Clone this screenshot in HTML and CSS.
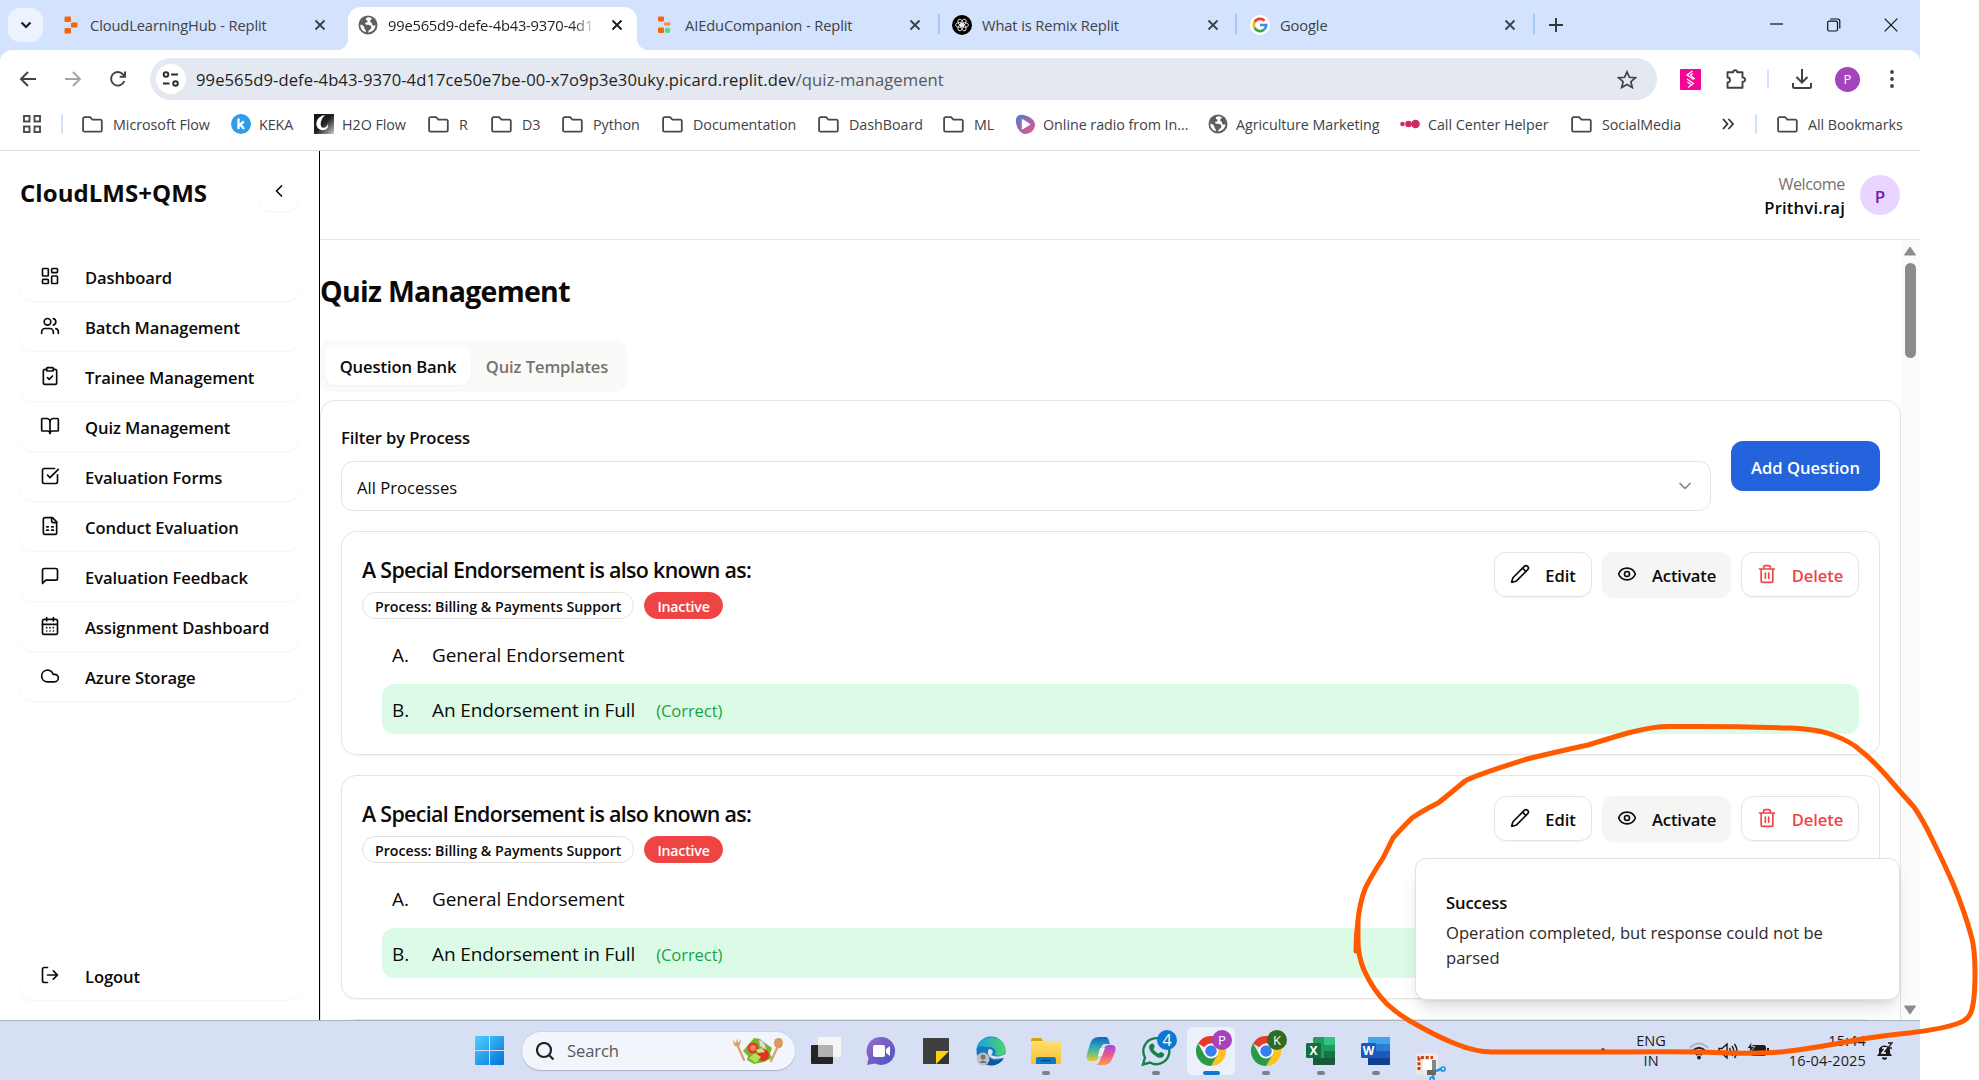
FILE: index.html
```html
<!DOCTYPE html>
<html lang="en">
<head>
<meta charset="utf-8">
<title>Quiz Management</title>
<link rel="stylesheet" href="styles.css">
</head>
<body>
<svg class="defs" width="0" height="0">
  <defs>
    <linearGradient id="g-win" x1="0" y1="0" x2="1" y2="1"><stop offset="0" stop-color="#4fd0ff"/><stop offset="1" stop-color="#0072d6"/></linearGradient>
    <linearGradient id="g-radio" x1="0" y1="0" x2="1" y2="1"><stop offset="0" stop-color="#4d7fd6"/><stop offset="1" stop-color="#f0507c"/></linearGradient>
    <linearGradient id="g-h2o" x1="0" y1="0" x2="1" y2="1"><stop offset="0" stop-color="#111"/><stop offset=".5" stop-color="#222"/><stop offset="1" stop-color="#ccc"/></linearGradient>
    <linearGradient id="g-chat" x1="0" y1="0" x2="1" y2="1"><stop offset="0" stop-color="#9a6bc9"/><stop offset="1" stop-color="#4a52c0"/></linearGradient>
    <linearGradient id="g-edge" x1="0" y1="0" x2="1" y2="0"><stop offset="0" stop-color="#1a9be6"/><stop offset="1" stop-color="#4fd66a"/></linearGradient>
    <linearGradient id="g-folder" x1="0" y1="0" x2="0" y2="1"><stop offset="0" stop-color="#ffdf6e"/><stop offset="1" stop-color="#f7c233"/></linearGradient>
    <linearGradient id="g-cop1" x1="0" y1="0" x2="0" y2="1"><stop offset="0" stop-color="#1464c8"/><stop offset=".5" stop-color="#35b6b0"/><stop offset="1" stop-color="#e8c820"/></linearGradient>
    <linearGradient id="g-cop2" x1="0" y1="0" x2="0" y2="1"><stop offset="0" stop-color="#9a4de0"/><stop offset=".5" stop-color="#ec5a8e"/><stop offset="1" stop-color="#f89a50"/></linearGradient>
  </defs>
  <symbol id="folder" viewBox="0 0 21 17"><path d="M2.5 1.2h5.6l2.3 2.5h8a1.4 1.4 0 0 1 1.4 1.4v9.2a1.4 1.4 0 0 1-1.4 1.4H2.5a1.4 1.4 0 0 1-1.4-1.4V2.6a1.4 1.4 0 0 1 1.4-1.4z" fill="none" stroke="#47494d" stroke-width="1.8"/></symbol>
  <symbol id="x" viewBox="0 0 12 12"><path d="M1.5 1.5l9 9M10.500 1.500l-9 9" fill="none" stroke="currentColor" stroke-width="1.9"/></symbol>
  <symbol id="globe" viewBox="0 0 20 20"><circle cx="10" cy="10" r="9.500" fill="#5c6065"/><path d="M10.500 2.300c-3 .2-3.200 2.200-1.600 3.200 1.500.9.400 2.200-1.100 2.300-1.500.1-.4 2.100 1.400 2 2.400-.2 4.500.8 4.200 2.800-.3 2-2.600 2-3.200 4.800 4-.1 7-3.300 7.200-7.100-1.500 1-3.400.4-3.300-1.200.1-1.600-2.100-1.300-2-3 .1-1.300 1.500-1.300 1.800-2.600-1-.7-2.200-1.200-3.400-1.200z" fill="#fff"/><path d="M2.400 9.500c2 .2 4 1.700 4 3.500 0 1.500 1.500 1.300 1.600 4.200C4.500 16.600 2 13.300 2.400 9.500z" fill="#fff"/></symbol>
  <symbol id="pencil" viewBox="0 0 24 24"><path d="M21.174 6.812a1 1 0 0 0-3.986-3.987L3.842 16.174a2 2 0 0 0-.5.830l-1.321 4.352a.5.500 0 0 0 .623.622l4.353-1.320a2 2 0 0 0 .830-.497z"/><path d="m15 5 4 4"/></symbol>
  <symbol id="eye" viewBox="0 0 24 24"><path d="M2.062 12.348a1 1 0 0 1 0-.696 10.750 10.750 0 0 1 19.876 0 1 1 0 0 1 0 .696 10.750 10.750 0 0 1-19.876 0"/><circle cx="12" cy="12" r="3"/></symbol>
  <symbol id="trash" viewBox="0 0 24 24"><path d="M3 6h18M19 6v14c0 1-1 2-2 2H7c-1 0-2-1-2-2V6M8 6V4c0-1 1-2 2-2h4c1 0 2 1 2 2v2M10 11v6M14 11v6"/></symbol>
  <symbol id="chrome" viewBox="0 0 30 30"><path d="M15 15L2 7.500A15 15 0 0 1 28 7.500H15z" fill="#e33b2e"/><path d="M28 7.500A15 15 0 0 1 15 30l6.500-11.200L15 7.500z" fill="#fcc31e"/><path d="M2 7.500A15 15 0 0 0 15 30l6.500-11.200L8.500 18.800z" fill="#2a9a48"/><circle cx="15" cy="15" r="7.500" fill="#fff"/><circle cx="15" cy="15" r="5.800" fill="#3a7df0"/></symbol>
</svg>

<div class="window">
  <header class="tabstrip">
    <button class="tab-search"><svg width="12" height="8" viewBox="0 0 12 8"><path d="M1.500 1.500L6 6l4.500-4.500" fill="none" stroke="#1f1f1f" stroke-width="2.200"/></svg></button>
    <div class="tab tab-1">
      <svg class="fav" viewBox="0 0 20 20"><g fill="#f5650f"><rect x="4.500" y="1.500" width="6.500" height="5.500" rx="1"/><rect x="11" y="7.500" width="6.500" height="5" rx="1"/><rect x="4.500" y="13" width="6.500" height="5.500" rx="1"/></g></svg>
      <span class="tab-title">CloudLearningHub - Replit</span><svg class="close"><use href="#x"/></svg>
    </div>
    <div class="tab tab-2 active">
      <svg class="fav"><use href="#globe"/></svg>
      <span class="tab-title">99e565d9-defe-4b43-9370-4d1</span><svg class="close"><use href="#x"/></svg>
    </div>
    <div class="tab tab-3">
      <svg class="fav" viewBox="0 0 20 20"><rect x="3" y="1.500" width="6" height="5" rx="1" fill="#f5650f"/><rect x="9" y="7.500" width="6.500" height="3" rx="1" fill="#f58a50"/><rect x="3" y="12.500" width="6" height="5.500" rx="1" fill="#f5650f"/><circle cx="12.500" cy="15.300" r="2.800" fill="#5fd97e"/></svg>
      <span class="tab-title">AIEduCompanion - Replit</span><svg class="close"><use href="#x"/></svg>
    </div>
    <div class="tab tab-4">
      <svg class="fav" viewBox="0 0 20 20"><circle cx="10" cy="10" r="10" fill="#000"/><g fill="none" stroke="#fff" stroke-width=".8"><ellipse cx="10" cy="7.300" rx="2.300" ry="3.800" transform="rotate(30 10 10)"/><ellipse cx="10" cy="7.300" rx="2.300" ry="3.800" transform="rotate(90 10 10)"/><ellipse cx="10" cy="7.300" rx="2.300" ry="3.800" transform="rotate(150 10 10)"/><ellipse cx="10" cy="7.300" rx="2.300" ry="3.800" transform="rotate(210 10 10)"/><ellipse cx="10" cy="7.300" rx="2.300" ry="3.800" transform="rotate(270 10 10)"/><ellipse cx="10" cy="7.300" rx="2.300" ry="3.800" transform="rotate(330 10 10)"/></g></svg>
      <span class="tab-title">What is Remix Replit</span><svg class="close"><use href="#x"/></svg>
    </div>
    <div class="tab tab-5">
      <svg class="fav" viewBox="0 0 20 20"><circle cx="10" cy="10" r="10" fill="#fff"/><g fill="none" stroke-width="2.700"><path d="M14.500 5.700A6.200 6.200 0 0 0 4.600 7" stroke="#ea4335"/><path d="M4.600 7a6.200 6.200 0 0 0 0 6" stroke="#fbbc05"/><path d="M4.600 13a6.200 6.200 0 0 0 9.600 1.500" stroke="#34a853"/><path d="M14.200 14.500A6 6 0 0 0 16.200 10H10" stroke="#4285f4"/></g></svg>
      <span class="tab-title">Google</span><svg class="close"><use href="#x"/></svg>
    </div>
    <svg class="plus" width="14" height="14"><path d="M7 0v14M0 7h14" stroke="#33363a" stroke-width="1.900"/></svg>
    <div class="win-controls">
      <svg width="14" height="14"><path d="M0 6h13" stroke="#111" stroke-width="1.200"/></svg>
      <svg width="14" height="14" fill="none" stroke="#111" stroke-width="1.200"><rect x=".7" y="3.200" width="9.800" height="9.800" rx="1.500"/><path d="M3.200 1h7.300a2.300 2.300 0 0 1 2.300 2.300v7.200"/></svg>
      <svg width="14" height="14"><path d="M.7.7l12.600 12.600M13.300.7L.7 13.300" stroke="#111" stroke-width="1.200"/></svg>
    </div>
  </header>

  <div class="toolbar-wrap">
  <div class="toolbar">
    <div class="nav-icons">
      <svg width="18" height="16" viewBox="0 0 18 16" fill="none" stroke="#3f4246" stroke-width="1.900"><path d="M17 8H2.500M9 1L2 8l7 7"/></svg>
      <svg width="18" height="16" viewBox="0 0 18 16" fill="none" stroke="#a3a5a8" stroke-width="1.900"><path d="M1 8h14.500M9 1l7 7-7 7"/></svg>
      <svg width="18" height="18" viewBox="0 0 18 18" fill="none" stroke="#3f4246" stroke-width="1.900"><path d="M15.300 11A6.800 6.800 0 1 1 14 4.300l2 2M16 1.500v5.300h-5.300"/></svg>
    </div>
    <div class="omnibox">
      <span class="site"><svg width="18" height="16" viewBox="0 0 18 16" fill="none" stroke="#2b2d30" stroke-width="1.900"><circle cx="4" cy="3.500" r="2.300"/><path d="M9 3.500h7M1 12.500h6.500"/><circle cx="13.500" cy="12.500" r="2.300"/></svg></span>
      <span class="url">99e565d9-defe-4b43-9370-4d17ce50e7be-00-x7o9p3e30uky.picard.replit.dev<i>/quiz-management</i></span>
      <svg class="star" width="20" height="19" viewBox="0 0 20 19"><path d="M10 1.800l2.400 5.500 6 .5-4.500 3.900 1.400 5.800L10 14.400l-5.300 3.100 1.400-5.800-4.500-3.900 6-.5z" fill="none" stroke="#3f4246" stroke-width="1.700"/></svg>
    </div>
    <div class="actions">
      <svg width="21" height="21"><rect width="21" height="21" rx="1" fill="#f50596"/><path d="M12.500 2L7 6l6.500 4.500M10.500 6.500L15 10M7 10l6.500 4.500L8 18.500M7.500 13l3.500 2.500M13 4.500L10 6.500" stroke="#fff" stroke-width="1.200" fill="none"/></svg>
      <svg width="22" height="22" viewBox="0 0 22 22"><path d="M2.500 4.300h5.700a2 2 0 1 1 4 0h5.300v5.200a2.200 2.200 0 1 1 0 4.300v6H2.500v-5.300a2.500 2.500 0 0 0 0-5z" fill="none" stroke="#3f4246" stroke-width="1.900" stroke-linejoin="round"/></svg>
      <i class="sep"></i>
      <svg width="20" height="20" fill="none" stroke="#3f4246" stroke-width="2"><path d="M10 0v13M4.500 8l5.500 5.500L15.500 8M1 14v3.500A1.500 1.500 0 0 0 2.500 19h15a1.500 1.500 0 0 0 1.500-1.500V14"/></svg>
      <span class="profile">P</span>
      <svg width="4" height="18" fill="#3f4246"><circle cx="2" cy="2" r="1.900"/><circle cx="2" cy="9" r="1.900"/><circle cx="2" cy="16" r="1.900"/></svg>
    </div>
  </div>
  </div>

  <nav class="bookmarks">
    <svg class="apps" width="18" height="18" fill="none" stroke="#47494d" stroke-width="1.900"><rect x="1" y="1" width="5.500" height="5.500"/><rect x="11.500" y="1" width="5.500" height="5.500"/><rect x="1" y="11.500" width="5.500" height="5.500"/><rect x="11.500" y="11.500" width="5.500" height="5.500"/></svg>
    <i class="sep"></i>
    <a><svg class="fo"><use href="#folder"/></svg>Microsoft Flow</a>
    <a class="site-bm"><svg class="bi" viewBox="0 0 20 20"><circle cx="10" cy="10" r="10" fill="#2f9de6"/><path d="M7.500 4.500v10.500M12.800 7.500L8 11.500M9.500 10.500l3.500 4.500" stroke="#fff" stroke-width="2.300" fill="none"/></svg>KEKA</a>
    <a class="site-bm"><svg class="bi" viewBox="0 0 20 20"><rect width="20" height="20" fill="url(#g-h2o)"/><path d="M11 1C2 2 0 12 5 15c5 3 10 0 9-5-1 4-6 5-7 2-1-4 1-8 4-11z" fill="#fff"/></svg>H2O Flow</a>
    <a><svg class="fo"><use href="#folder"/></svg>R</a>
    <a><svg class="fo"><use href="#folder"/></svg>D3</a>
    <a><svg class="fo"><use href="#folder"/></svg>Python</a>
    <a><svg class="fo"><use href="#folder"/></svg>Documentation</a>
    <a><svg class="fo"><use href="#folder"/></svg>DashBoard</a>
    <a><svg class="fo"><use href="#folder"/></svg>ML</a>
    <a class="site-bm"><svg class="bi" viewBox="0 0 20 20"><path d="M1 5C2 1 5 0 9 1c6 1.500 11 5 11 10s-5 9-10 9S0 12 1 5z" fill="url(#g-radio)"/><path d="M7.500 6l7 4.300-7 4.300z" fill="#fff" stroke="#fff" stroke-width="1.500" stroke-linejoin="round"/></svg>Online radio from In...</a>
    <a class="site-bm"><svg class="bi"><use href="#globe"/></svg>Agriculture Marketing</a>
    <a class="site-bm"><svg class="bi" viewBox="0 0 20 20" fill="#d02c60"><circle cx="2.500" cy="10" r="2.300"/><circle cx="8.500" cy="10" r="3.300"/><circle cx="15.500" cy="10" r="4.300"/></svg>Call Center Helper</a>
    <a><svg class="fo"><use href="#folder"/></svg>SocialMedia</a>
    <svg width="12" height="12" fill="none" stroke="#33363a" stroke-width="1.800"><path d="M1 1l4.500 5L1 11M6.500 1L11 6l-4.500 5"/></svg>
    <i class="sep"></i>
    <a><svg class="fo"><use href="#folder"/></svg>All Bookmarks</a>
  </nav>

  <div class="app">
    <aside class="sidebar">
      <div class="brand"><span>CloudLMS+QMS</span><button class="collapse"><svg class="ic" viewBox="0 0 24 24"><path d="m15 18-6-6 6-6"/></svg></button></div>
      <ul class="menu">
        <li><svg class="ic" viewBox="0 0 24 24"><rect width="7" height="9" x="3" y="3" rx="1"/><rect width="7" height="5" x="14" y="3" rx="1"/><rect width="7" height="9" x="14" y="12" rx="1"/><rect width="7" height="5" x="3" y="16" rx="1"/></svg>Dashboard</li>
        <li><svg class="ic" viewBox="0 0 24 24"><path d="M16 21v-2a4 4 0 0 0-4-4H6a4 4 0 0 0-4 4v2"/><circle cx="9" cy="7" r="4"/><path d="M22 21v-2a4 4 0 0 0-3-3.870M16 3.130a4 4 0 0 1 0 7.750"/></svg>Batch Management</li>
        <li><svg class="ic" viewBox="0 0 24 24"><rect width="8" height="4" x="8" y="2" rx="1"/><path d="M16 4h2a2 2 0 0 1 2 2v14a2 2 0 0 1-2 2H6a2 2 0 0 1-2-2V6a2 2 0 0 1 2-2h2"/><path d="m9 14 2 2 4-4"/></svg>Trainee Management</li>
        <li><svg class="ic" viewBox="0 0 24 24"><path d="M12 7v14"/><path d="M3 18a1 1 0 0 1-1-1V4a1 1 0 0 1 1-1h5a4 4 0 0 1 4 4 4 4 0 0 1 4-4h5a1 1 0 0 1 1 1v13a1 1 0 0 1-1 1h-6a3 3 0 0 0-3 3 3 3 0 0 0-3-3z"/></svg>Quiz Management</li>
        <li><svg class="ic" viewBox="0 0 24 24"><path d="M21 10.500V19a2 2 0 0 1-2 2H5a2 2 0 0 1-2-2V5a2 2 0 0 1 2-2h12.500"/><path d="m9 11 3 3L22 4"/></svg>Evaluation Forms</li>
        <li><svg class="ic" viewBox="0 0 24 24"><path d="M15 2H6a2 2 0 0 0-2 2v16a2 2 0 0 0 2 2h12a2 2 0 0 0 2-2V7Z"/><path d="M14 2v4a2 2 0 0 0 2 2h4M8 13h2M14 13h2M8 17h2M14 17h2"/></svg>Conduct Evaluation</li>
        <li><svg class="ic" viewBox="0 0 24 24"><path d="M21 15a2 2 0 0 1-2 2H7l-4 4V5a2 2 0 0 1 2-2h14a2 2 0 0 1 2 2z"/></svg>Evaluation Feedback</li>
        <li><svg class="ic" viewBox="0 0 24 24"><rect width="18" height="18" x="3" y="4" rx="2"/><path d="M8 2v4M16 2v4M3 10h18M8 14h.01M12 14h.01M16 14h.01M8 18h.01M12 18h.01M16 18h.01"/></svg>Assignment Dashboard</li>
        <li><svg class="ic" viewBox="0 0 24 24"><path d="M17.500 19H9a7 7 0 1 1 6.710-9h1.790a4.500 4.500 0 1 1 0 9Z"/></svg>Azure Storage</li>
      </ul>
      <ul class="menu foot"><li><svg class="ic" viewBox="0 0 24 24"><path d="M9 21H5a2 2 0 0 1-2-2V5a2 2 0 0 1 2-2h4M16 17l5-5-5-5M21 12H9"/></svg>Logout</li></ul>
    </aside>

    <section class="page">
      <div class="topbar"><div class="who"><small>Welcome</small><b>Prithvi.raj</b></div><span class="avatar">P</span></div>
      <div class="scroller">
        <main class="content">
          <h1>Quiz Management</h1>
          <div class="tabs"><span class="on">Question Bank</span><span>Quiz Templates</span></div>
          <div class="panel">
            <div class="filter">
              <div class="field"><label>Filter by Process</label>
                <div class="select"><span>All Processes</span><svg class="ic dim" viewBox="0 0 24 24"><path d="m6 9 6 6 6-6"/></svg></div>
              </div>
              <button class="primary">Add Question</button>
            </div>
            <article class="card">
              <div class="card-head">
                <div class="q"><h2>A Special Endorsement is also known as:</h2><p><span class="badge">Process: Billing &amp; Payments Support</span><span class="badge red">Inactive</span></p></div>
                <div class="btns"><button class="btn edit"><svg class="ic"><use href="#pencil"/></svg>Edit</button><button class="btn soft"><svg class="ic"><use href="#eye"/></svg>Activate</button><button class="btn del"><svg class="ic"><use href="#trash"/></svg>Delete</button></div>
              </div>
              <ol class="opts"><li><i>A.</i>General Endorsement</li><li class="right"><i>B.</i>An Endorsement in Full<em>(Correct)</em></li></ol>
            </article>
            <article class="card">
              <div class="card-head">
                <div class="q"><h2>A Special Endorsement is also known as:</h2><p><span class="badge">Process: Billing &amp; Payments Support</span><span class="badge red">Inactive</span></p></div>
                <div class="btns"><button class="btn edit"><svg class="ic"><use href="#pencil"/></svg>Edit</button><button class="btn soft"><svg class="ic"><use href="#eye"/></svg>Activate</button><button class="btn del"><svg class="ic"><use href="#trash"/></svg>Delete</button></div>
              </div>
              <ol class="opts"><li><i>A.</i>General Endorsement</li><li class="right"><i>B.</i>An Endorsement in Full<em>(Correct)</em></li></ol>
            </article>
            <article class="card"></article>
          </div>
        </main>
        <div class="scrollbar">
          <svg width="14" height="10"><path d="M7 1l5.500 8h-11z" fill="#8b8b8b" stroke="#8b8b8b" stroke-linejoin="round"/></svg>
          <i class="thumb"></i>
          <svg width="14" height="10"><path d="M7 9l5.500-8h-11z" fill="#8b8b8b" stroke="#8b8b8b" stroke-linejoin="round"/></svg>
        </div>
      </div>
    </section>
    <div class="toast"><strong>Success</strong><p>Operation completed, but response could not be<br>parsed</p></div>
  </div>

  <footer class="taskbar">
    <svg class="start" width="29" height="29" fill="url(#g-win)"><path d="M0 1a1 1 0 0 1 1-1h13v14H0zM15 0h13a1 1 0 0 1 1 1v13H15zM0 15h14v14H1a1 1 0 0 1-1-1zM15 15h14v13a1 1 0 0 1-1 1H15z"/></svg>
    <div class="search">
      <svg width="18" height="18" fill="none" stroke="#222" stroke-width="2.200"><circle cx="8" cy="8" r="7"/><path d="M13 13l4.500 4.500"/></svg><span>Search</span>
      <svg class="salad" width="52" height="28" viewBox="0 0 52 28"><g stroke="#dca06c" stroke-width="2.200" stroke-linecap="round"><path d="M5 7l7 16M47 7l-8 17"/></g><path d="M1 3l1 5q3 3 6 0l1-6-2.500 4L5 1.500 4 6z" fill="#dca06c"/><ellipse cx="46.500" cy="6" rx="4.500" ry="5.300" fill="#d79a63"/><path d="M11 14l5-6 6-7 6 1 5 4 7 5-2 6 2 4-8 4-10 2-7-4 1-4z" fill="#79b52c"/><circle cx="21" cy="11" r="5.500" fill="#df3a26"/><circle cx="31" cy="18" r="6" fill="#d93424"/><circle cx="21" cy="11" r="3" fill="#f08468"/><path d="M27 3q6 1 7 10l-6-4z" fill="#e9d3e6"/><path d="M17 21l6-5 6 4-5 6z" fill="#b6df58"/><path d="M24 13l6-2 3 4-7 1z" fill="#cae87b"/></svg>
    </div>
    <div class="dock">
      <span class="task"><svg width="30" height="30"><rect x="0" y="9" width="22" height="19" rx="1" fill="#252525"/><rect x="7" y="1" width="23" height="20" rx="1" fill="#f5f5f5"/><rect x="7" y="9" width="15" height="12" fill="#b1b1b1"/></svg></span>
      <span class="task"><svg width="30" height="30"><path d="M15 1a14 14 0 1 1-6 26.600L1 29l1.500-7A14 14 0 0 1 15 1z" fill="url(#g-chat)"/><rect x="7" y="9" width="12" height="12" rx="2" fill="#fff"/><path d="M20 13l4-3v10l-4-3z" fill="#fff"/></svg></span>
      <span class="task"><svg width="30" height="30"><path d="M2 2h26v13L15 28H2z" fill="#3f3f3f"/><path d="M15 28h13V15z" fill="#333"/><path d="M15 15h13L15 28z" fill="#fcd20a"/></svg></span>
      <span class="task"><svg width="30" height="30"><circle cx="15" cy="15" r="14.500" fill="#1479c9"/><path d="M.5 13C3-2 27-3 29.500 13c.5 6-6 8-11 6 3-3 0-8-5-8-5 0-10-2-13 2z" fill="url(#g-edge)"/><path d="M12 17c1 9 10 9 16 5-4 7-13 9-18 6-5-4-3-11 2-11z" fill="#12569c"/><path d="M13 13c4 0 5 4 2 6 4 2 10 2 14-1v4l-11 1c-5-1-8-6-5-10z" fill="#d8e0f3"/><circle cx="7" cy="23" r="6.500" fill="#c3c1bf"/><circle cx="7" cy="21" r="2.500" fill="#737373"/><path d="M3 27q4-5 8 0z" fill="#737373"/></svg></span>
      <span class="task run"><svg width="30" height="30"><path d="M0 4a2 2 0 0 1 2-2h8l3 4H0z" fill="#dda005"/><rect y="5" width="30" height="23" rx="1.500" fill="url(#g-folder)"/><path d="M5 28v-5a2 2 0 0 1 2-2h16a2 2 0 0 1 2 2v5z" fill="#0f79c9"/><path d="M10 24.500h10" stroke="#064b87" stroke-width="1.500"/></svg></span>
      <span class="task"><svg width="30" height="30"><path d="M13 1h7q2 0 3 4l1 3h-5q-3 0-4 4l-3 10q-1 3-4 3H5q-6 0-4-7L4 8q2-7 9-7z" fill="url(#g-cop1)"/><path d="M17 29h-7q3-1 4-5l4-11q1-4 5-4h3q5 0 3 7l-3 7q-2 6-9 6z" fill="url(#g-cop2)"/><path d="M14 12h5l-3 8h-4z" fill="#eaf0fa"/></svg></span>
      <span class="task run"><svg width="30" height="30"><path d="M2 28.500l2-7A13 13 0 1 1 9 26.500z" fill="none" stroke="#178050" stroke-width="2.400"/><path d="M10 8c2-1 3 0 3.500 2s-1 2-1 3c1 2 3 4 5 4.500 1 0 1.500-2 3-1.300s3 1 2.500 3-3 3-5 2.500C13 20 8 15 8 11c0-1 1-2.500 2-3z" fill="#178050"/></svg><b class="pip blue">4</b></span>
      <span class="task run current"><svg width="30" height="30"><use href="#chrome"/></svg><b class="pip purple">P</b></span>
      <span class="task run"><svg width="30" height="30"><use href="#chrome"/></svg><b class="pip green">K</b></span>
      <span class="task run"><svg width="30" height="30"><rect x="7" y="1" width="22" height="28" rx="1.500" fill="#1f9c5f"/><path d="M18 1h10a1 1 0 0 1 1 1v7H18z" fill="#33c281"/><path d="M18 15h11v7H18z" fill="#177245"/><path d="M7 22h22v6a1 1 0 0 1-1 1H7z" fill="#185c37"/><rect y="7" width="15" height="15" rx="1.500" fill="#10703f"/><text x="7.500" y="19" class="office">X</text></svg></span>
      <span class="task run"><svg width="30" height="30"><rect x="7" y="1" width="22" height="28" rx="1.500" fill="#2b7cd3"/><path d="M7 1h21a1 1 0 0 1 1 1v6H7z" fill="#41a5ee"/><path d="M7 15h22v7H7z" fill="#185abd"/><path d="M7 22h22v6a1 1 0 0 1-1 1H7z" fill="#103f91"/><rect y="7" width="15" height="15" rx="1.500" fill="#185abd"/><text x="7.500" y="19" class="office">W</text></svg></span>
      <span class="task snip"><svg width="30" height="28"><rect width="22" height="22" rx="3" fill="#ece9e6"/><path d="M7 7h10v10H7z" fill="#fff"/><path d="M3 17V4.500h14" fill="none" stroke="#d83b10" stroke-width="3" stroke-dasharray="3 1.800"/><path d="M16 7h4v12h-4z" fill="#858585"/><path d="M11 17h9v5h-9z" fill="#666"/><path d="M20 18l5-2M17 22v4" stroke="#2499dd" stroke-width="2.500"/><circle cx="27" cy="16" r="2" fill="none" stroke="#2499dd" stroke-width="1.700"/><circle cx="16" cy="26" r="2" fill="none" stroke="#2499dd" stroke-width="1.700"/></svg></span>
    </div>
    <div class="tray">
      <svg class="up" width="10" height="7"><path d="M1 6l4-4 4 4" fill="none" stroke="#222" stroke-width="1.800"/></svg>
      <span class="lang">ENG<br>IN</span>
      <svg width="20" height="18" fill="none" stroke="#1c1c1c" stroke-width="1.800"><path d="M1 6q9-9 18 0" stroke="#a9b0c2"/><path d="M3.500 9q6.500-6.500 13 0M7 13q3-3 6 0"/><circle cx="10" cy="15.500" r="1" fill="#1c1c1c"/></svg>
      <svg width="20" height="18" fill="none" stroke="#1c1c1c" stroke-width="1.400"><path d="M1 6.500h3l5-4.500v14l-5-4.500H1zM11.500 6q2 3 0 6M14 4q3.500 5 0 10M16.500 2q5 7 0 14"/></svg>
      <svg width="22" height="18"><rect x="4" y="3" width="15" height="11" rx="2.500" fill="#1c1c1c"/><rect x="20" y="6" width="2" height="5" fill="#1c1c1c"/><path d="M5-.5L0 6.500h3l-1 5 6-7H4.500z" fill="#1c1c1c" stroke="#d6dff3" stroke-width=".8"/></svg>
      <span class="clock">15:44<br>16-04-2025</span>
      <svg class="bell" width="18" height="20"><path d="M1 15l2-3V8a6 6 0 0 1 11 0v4l2 3z" fill="#1c1c1c"/><path d="M6 17h5q-2 3-5 0z" fill="#1c1c1c" stroke="#1c1c1c"/><path d="M12 2h4l-4 5h4" fill="none" stroke="#1c1c1c" stroke-width="1.300"/><path d="M6 7h4l-4 5h4" fill="none" stroke="#fff" stroke-width="1.300"/></svg>
    </div>
  </footer>
</div>

<svg class="ink" viewBox="0 0 1979 1080"><path d="M1356 951Q1356 935 1358 920Q1360 902 1365 889Q1370 878 1383 858Q1386 852 1393 838Q1401 829 1412 818Q1422 811 1438 803Q1446 797 1465 781Q1473 776 1527 759Q1560 751 1588 745Q1620 735 1632 732Q1655 726 1672 726.500Q1730 726 1788 728Q1818 729 1833 735Q1852 742 1861 751Q1873 760 1891 781Q1904 796 1914 807Q1923 820 1931 837Q1944 863 1954 886Q1965 913 1971 935Q1975 948 1975 972Q1975 998 1972 1009Q1970 1019 1959 1023Q1943 1029 1909 1033Q1880 1036 1856 1040Q1815 1048 1789 1051Q1770 1054 1732 1053Q1680 1051 1625 1052L1492 1052Q1476 1052 1456 1044Q1440 1038 1417 1025Q1400 1016 1387 1004Q1373 990 1364 970Q1358 956 1358 940L1358 920"/></svg>
</body>
</html>
```
FILE: styles.css
```css
* { box-sizing: border-box; }
body { margin: 0; width: 1979px; height: 1080px; overflow: hidden; position: relative; background: #fff; font-family: "Open Sans", "Noto Sans", sans-serif; font-size: 16.600px; color: #0c0a09; }
button { font: inherit; color: inherit; border: 0; background: none; padding: 0; display: flex; align-items: center; justify-content: center; }
ul, ol, h1, h2, p { margin: 0; padding: 0; list-style: none; }
i, em { font-style: normal; }
svg { flex: none; display: block; }
.defs { position: absolute; }
.window { width: 1920px; height: 1080px; display: flex; flex-direction: column; }

/* tab strip */
.tabstrip { height: 50px; flex: none; background: #d3e2fd; display: flex; align-items: center; padding-left: 8px; font-size: 14.700px; letter-spacing: -.12px; color: #3f4246; }
.tab-search { width: 35px; height: 34px; border-radius: 12px; background: #ecf2fe; }
.tab { display: flex; align-items: center; height: 43px; margin-top: 7px; padding: 0 14px 7px 10px; }
.tab .fav { width: 20px; height: 20px; margin-right: 10px; }
.tab-title { flex: 1; white-space: nowrap; }
.close { width: 12px; height: 12px; }
.tab-1 { width: 290px; margin-left: 17px; padding-left: 0; padding-right: 24px; }
.tab-2 { width: 289px; margin-left: -2px; }
.tab-2 .tab-title { margin-right: 14px; letter-spacing: -.2px; -webkit-mask: linear-gradient(90deg, #000 88%, transparent); mask: linear-gradient(90deg, #000 88%, transparent); }
.tab-3 { width: 303px; padding-left: 18px; padding-right: 19px; }
.tab-4 { width: 297px; padding-left: 12px; padding-right: 18px; }
.tab-5 { width: 298px; padding-left: 13px; padding-right: 19px; }
.tab-3, .tab-4, .tab-5 { background: linear-gradient(#a8c7fa, #a8c7fa) right 7px / 2px 20px no-repeat; }
.tab.active { background: #fff; border-radius: 13px 13px 0 0; color: #1f1f1f; position: relative; }
.tab.active::before, .tab.active::after { content: ""; position: absolute; bottom: 0; width: 12px; height: 12px; }
.tab.active::before { left: -12px; background: radial-gradient(circle at 0 0, transparent 12px, #fff 12.500px); }
.tab.active::after { right: -12px; background: radial-gradient(circle at 100% 0, transparent 12px, #fff 12.500px); }
.plus { margin-left: 14px; }
.win-controls { margin-left: auto; display: flex; gap: 43px; padding-right: 22px; }

/* toolbar */
.toolbar-wrap { background: #d3e2fd; flex: none; }
.toolbar { height: 50px; background: #fff; border-radius: 12px 12px 0 0; display: flex; align-items: center; padding-top: 8px; }
.nav-icons { width: 150px; display: flex; gap: 27px; padding-left: 19px; align-items: center; }
.omnibox { width: 1507px; height: 42px; border-radius: 21px; background: #e3e8f1; display: flex; align-items: center; padding: 0 20px 0 6px; }
.site { width: 30px; height: 30px; border-radius: 50%; background: #fff; display: flex; align-items: center; justify-content: center; margin-right: 10px; }
.url { flex: 1; font-size: 16.600px; letter-spacing: .08px; color: #1f1f1f; white-space: nowrap; }
.url i { color: #55585d; }
.actions { flex: 1; display: flex; align-items: center; padding-left: 23px; }
.actions > :nth-child(2) { margin-left: 24px; }
.sep { width: 2px; height: 20px; background: #d3e2fd; border-radius: 1px; flex: none; }
.actions .sep { margin: 0 23px 0 20px; }
.profile { width: 25px; height: 25px; border-radius: 50%; background: #a443bb; color: #fff; font-size: 13px; display: flex; align-items: center; justify-content: center; margin: 0 30px 0 23px; }

/* bookmarks */
.bookmarks { height: 51px; flex: none; display: grid; grid-template-columns: 38px 21px 149px 83px 114px 63px 71px 100px 156px 125px 72px 193px 192px 171px 151px 33px 22px 1fr; align-items: center; padding: 0 0 2px 23px; border-bottom: 1px solid #dedede; font-size: 14.300px; letter-spacing: -.04px; color: #3f4246; }
.bookmarks a { display: flex; align-items: center; gap: 10px; white-space: nowrap; }
.bookmarks .site-bm { gap: 8px; }
.fo { width: 21px; height: 17px; }
.bi { width: 20px; height: 20px; }

/* app shell */
.app { flex: 1; min-height: 0; display: flex; position: relative; }
.sidebar { width: 320px; border-right: 1px solid #000; padding: 20px 20px; display: flex; flex-direction: column; }
.brand { display: flex; justify-content: space-between; align-items: center; height: 40px; font-size: 24px; font-weight: 700; }
.brand span { padding-top: 2px; letter-spacing: .05px; }
.collapse { width: 40px; height: 40px; border-radius: 12px; box-shadow: 0 1px 2px rgba(0,0,0,.05); }
.ic { width: 20px; height: 20px; fill: none; stroke: currentColor; stroke-width: 2; stroke-linecap: round; stroke-linejoin: round; }
.menu { margin-top: 40px; font-weight: 600; letter-spacing: -.1px; }
.menu.foot { margin-top: auto; }
.menu li { height: 50px; padding: 2px 20px 0; display: flex; align-items: center; gap: 25px; border-radius: 12px; box-shadow: 0 1px 2px rgba(0,0,0,.05); }
.menu svg { margin-top: -3px; }
.page { flex: 1; display: flex; flex-direction: column; min-width: 0; }
.topbar { height: 89px; flex: none; border-bottom: 1px solid #e3e3e3; display: flex; justify-content: flex-end; align-items: center; gap: 15px; padding-right: 20px; }
.who { display: flex; flex-direction: column; text-align: right; line-height: 24px; padding-top: 2px; }
.who small { font-size: 16.200px; letter-spacing: -.45px; color: #78716c; }
.who b { font-weight: 600; letter-spacing: .2px; }
.avatar { width: 40px; height: 40px; border-radius: 50%; background: #e9d5ff; color: #6b21a8; font-weight: 600; font-size: 17px; display: flex; align-items: center; justify-content: center; padding-top: 2px; }
.scroller { flex: 1; min-height: 0; display: flex; overflow: hidden; }
.content { width: 1581px; padding-top: 29px; }
h1 { font-size: 28.500px; line-height: 45px; font-weight: 700; letter-spacing: -.7px; }
.tabs { margin-top: 26px; width: 307px; height: 50px; background: #fafaf9; border-radius: 12px; padding: 5px; display: flex; font-weight: 600; letter-spacing: -.1px; color: #78716c; box-shadow: 0 1px 2px rgba(0,0,0,.05); }
.tabs span { flex: none; width: 146px; height: 40px; line-height: 43px; text-align: center; border-radius: 10px; white-space: nowrap; }
.tabs .on { background: #fff; color: #0c0a09; box-shadow: 0 1px 2px rgba(0,0,0,.05); }
.tabs .on + span { width: 152px; }
.panel { margin-top: 10px; border: 1px solid #e6e4e3; border-radius: 15px; padding: 20px 20px 0; }
.filter { display: flex; align-items: center; gap: 20px; margin-bottom: 20px; height: 90px; }
.field { flex: 1; }
.field label { display: block; font-weight: 600; letter-spacing: -.1px; line-height: 30px; height: 40px; padding-top: 2px; }
.select { height: 50px; border: 1px solid #e6e4e3; border-radius: 12px; display: flex; justify-content: space-between; align-items: center; padding: 2px 15px 0; }
.dim { opacity: .5; margin-top: -3px; }
.primary { width: 149px; height: 50px; border-radius: 12px; background: #2563dc; color: #fff; font-weight: 600; padding-top: 2px; }
.card { height: 224px; border: 1px solid #e6e4e3; border-radius: 15px; padding: 20px; margin-bottom: 20px; box-shadow: 0 1px 2px rgba(0,0,0,.05); }
.card-head { display: flex; justify-content: space-between; height: 77px; }
h2 { font-size: 21.400px; font-weight: 600; line-height: 36px; height: 40px; white-space: nowrap; letter-spacing: -.67px; }
.q p { display: flex; gap: 10px; }
.badge { height: 27px; padding: 0 12px; border: 1px solid #e3e1e0; border-radius: 14px; font-size: 14.200px; letter-spacing: 0; font-weight: 600; line-height: 27px; white-space: nowrap; }
.badge.red { background: #ef4444; border-color: #ef4444; color: #fff; letter-spacing: -.2px; }
.btns { display: flex; gap: 10px; }
.btn { height: 45px; border: 1px solid #e6e4e3; border-radius: 12px; font-weight: 600; gap: 15px; box-shadow: 0 1px 2px rgba(0,0,0,.05); padding-top: 1px; letter-spacing: -.1px; }
.btn svg { margin-top: -2px; }
.edit { width: 98px; }
.soft { width: 129px; background: #f5f5f4; border-color: #f5f5f4; }
.del { width: 118px; color: #ef4444; }
.opts { margin-left: 20px; display: flex; flex-direction: column; gap: 5px; font-size: 19px; letter-spacing: -.1px; }
.opts li { height: 50px; border-radius: 12px; padding: 2px 10px 0; display: flex; align-items: center; }
.opts i { width: 40px; }
.opts em { color: #16a34a; font-size: 16.600px; margin-left: 21px; }
.right { background: #dcfbe7; }
.scrollbar { width: 19px; background: #fbfbfb; display: flex; flex-direction: column; align-items: center; padding: 6px 1px 5px 0; }
.thumb { width: 11px; height: 95px; border-radius: 6px; background: #8b8b8b; margin: 7px 0 auto; }
.toast { position: absolute; right: 20px; bottom: 20px; width: 485px; height: 142px; background: #fff; border: 1px solid #e3e1e0; border-radius: 11px; padding: 30px; box-shadow: 0 12px 18px -4px rgba(0,0,0,.12), 0 5px 8px -5px rgba(0,0,0,.12); line-height: 25px; }
.toast strong { font-weight: 600; display: block; padding-top: 1px; margin-bottom: 4px; line-height: 26px; letter-spacing: -.1px; }
.toast p { color: #2b2928; white-space: nowrap; }

/* taskbar */
.taskbar { height: 60px; flex: none; background: #d6dff3; border-top: 1px solid #aab0bd; display: flex; align-items: center; padding-left: 475px; }
.search { margin-left: 18px; width: 273px; height: 38px; border-radius: 19px; background: #f2f5fb; box-shadow: 0 1px 1px #a9b2c8, 0 -1px 1px #c9d3ea; display: flex; align-items: center; padding: 0 11px 0 14px; }
.search span { margin-left: 13px; flex: 1; color: #55585d; letter-spacing: -.1px; }
.dock { display: flex; gap: 7px; margin-left: 7px; }
.task { width: 48px; height: 48px; border-radius: 6px; display: flex; align-items: center; justify-content: center; position: relative; }
.run::after { content: ""; position: absolute; bottom: 0; width: 8px; height: 4px; border-radius: 2px; background: #7b7f8a; }
.current { background: #ecf0fa; }
.current::after { width: 17px; background: #0f78d4; }
.pip { position: absolute; left: 25px; top: 3px; width: 20px; height: 20px; border-radius: 50%; color: #fff; font-size: 13px; font-weight: 400; display: flex; align-items: center; justify-content: center; }
.blue { background: #0f78d4; font-size: 16px; }
.purple { background: #a443bb; }
.green { background: #316b22; }
.office { fill: #fff; font-size: 12px; font-weight: 700; text-anchor: middle; }
.snip { align-items: flex-end; }
.snip svg { margin-bottom: -6px; }
.tray { display: flex; align-items: center; margin-left: auto; padding-right: 26px; font-size: 14.500px; line-height: 20px; color: #1c1c1c; gap: 9px; }
.up { margin-right: 19px; }
.lang { text-align: center; margin-right: 14px; }
.clock { text-align: right; margin-left: 11px; margin-right: 1px; letter-spacing: .15px; }
.ink { position: absolute; left: 0; top: 0; width: 1979px; height: 1080px; fill: none; stroke: #ff5a00; stroke-width: 5; stroke-linecap: round; stroke-linejoin: round; }
```
